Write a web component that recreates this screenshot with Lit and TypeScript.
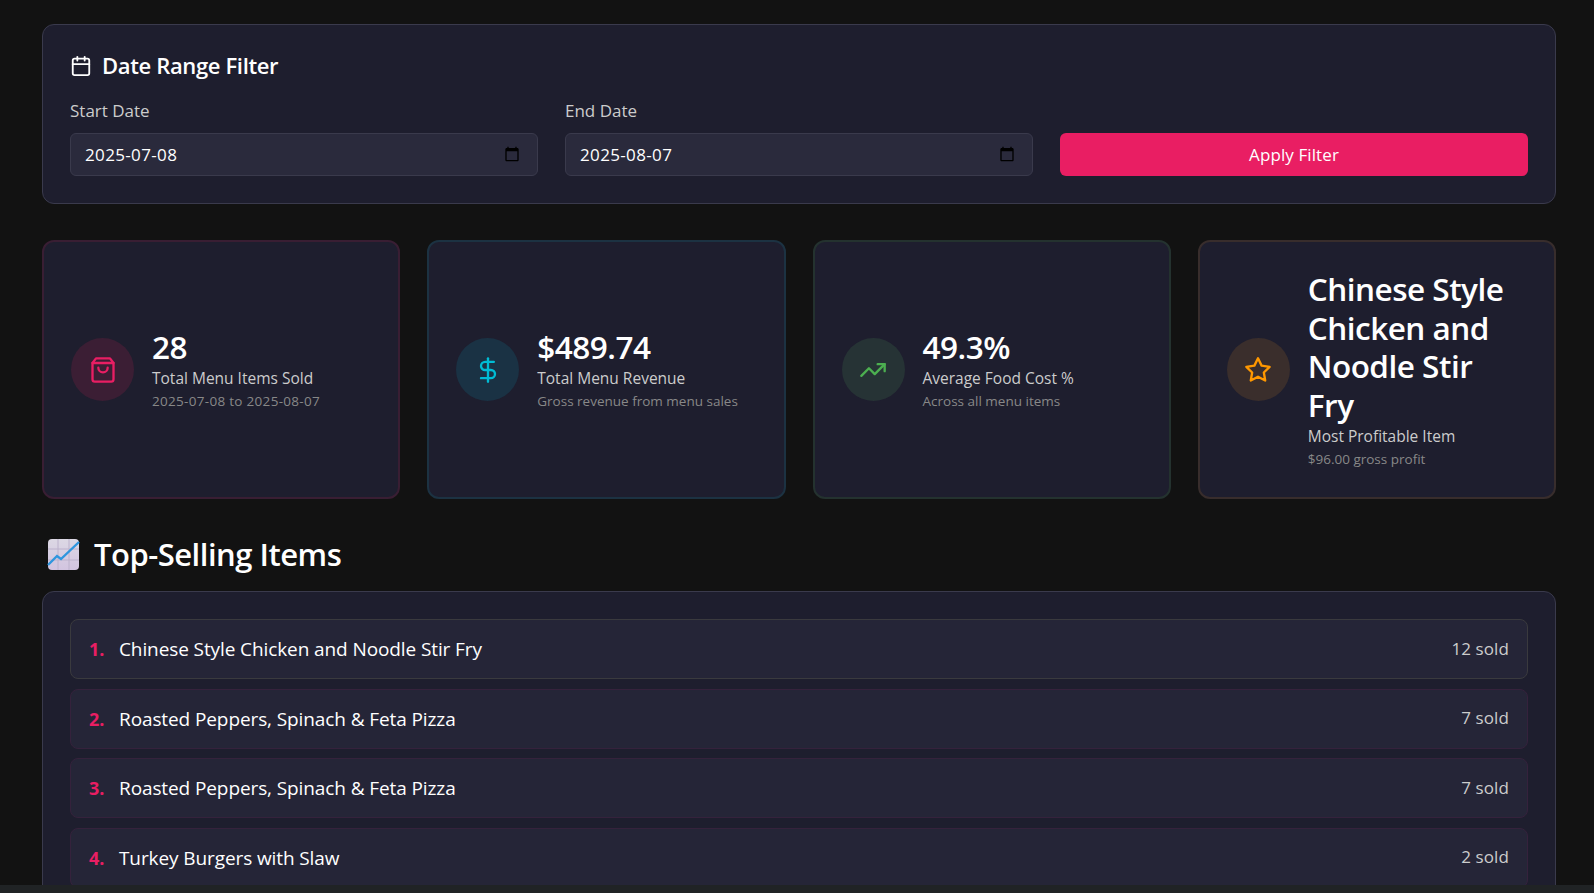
import { LitElement, html, css, svg } from "lit";
import { customElement } from "lit/decorators.js";

const calendar = svg`<rect x="3" y="4" width="18" height="18" rx="2"></rect><line x1="16" y1="2" x2="16" y2="6"></line><line x1="8" y1="2" x2="8" y2="6"></line><line x1="3" y1="10" x2="21" y2="10"></line>`;
const bag = svg`<path d="M6 2 3 6v14a2 2 0 0 0 2 2h14a2 2 0 0 0 2-2V6l-3-4Z"></path><line x1="3" y1="6" x2="21" y2="6"></line><path d="M16 10a4 4 0 0 1-8 0"></path>`;
const dollar = svg`<line x1="12" y1="2" x2="12" y2="22"></line><path d="M17 5H9.5a3.5 3.5 0 0 0 0 7h5a3.5 3.5 0 0 1 0 7H6"></path>`;
const trend = svg`<polyline points="22 7 13.5 15.5 8.5 10.5 2 17"></polyline><polyline points="16 7 22 7 22 13"></polyline>`;
const star = svg`<polygon points="12 2 15.09 8.26 22 9.27 17 14.14 18.18 21.02 12 17.77 5.82 21.02 7 14.14 2 9.27 8.91 8.26"></polygon>`;

const stats = [
  { tone: "pink", icon: bag, value: "28", label: "Total Menu Items Sold", sub: "2025-07-08 to 2025-08-07" },
  { tone: "cyan", icon: dollar, value: "$489.74", label: "Total Menu Revenue", sub: "Gross revenue from menu sales" },
  { tone: "green", icon: trend, value: "49.3%", label: "Average Food Cost %", sub: "Across all menu items" },
  { tone: "orange", icon: star, value: "Chinese Style Chicken and Noodle Stir Fry", label: "Most Profitable Item", sub: "$96.00 gross profit" },
];

const items = [
  { name: "Chinese Style Chicken and Noodle Stir Fry", sold: 12 },
  { name: "Roasted Peppers, Spinach & Feta Pizza", sold: 7 },
  { name: "Roasted Peppers, Spinach & Feta Pizza", sold: 7 },
  { name: "Turkey Burgers with Slaw", sold: 2 },
];

@customElement("app-root")
export class AppRoot extends LitElement {
  static styles = css`
    :host {
      display: flex;
      flex-direction: column;
      height: 100vh;
      overflow: hidden;
      background: #121212;
      color: #fff;
      font-family: "Open Sans", "Noto Sans", sans-serif;
    }
    .page {
      flex: 1;
      min-height: 0;
      overflow: hidden;
      padding: 24px 38px 0 42px;
    }
    .hscroll {
      flex: none;
      height: 8px;
      background: #202325;
    }
    .card {
      background: #1e1e2e;
      border: 1px solid #3a3a4c;
      border-radius: 12px;
      padding: 27px;
    }
    .filter-title {
      display: flex;
      align-items: center;
      gap: 9px;
      margin: -1px 0 18px;
      height: 30px;
      font-size: 22px;
      font-weight: 600;
      letter-spacing: -0.35px;
    }
    .filter-title span { margin: -2px 0 0 1px; }
    .icon {
      fill: none;
      stroke: currentColor;
      stroke-width: 2;
      stroke-linecap: round;
      stroke-linejoin: round;
      flex: none;
    }
    .filter-row {
      display: grid;
      grid-template-columns: repeat(3, 1fr);
      gap: 27px;
      align-items: end;
    }
    .field-label {
      display: block;
      font-size: 17px;
      line-height: 24px;
      margin-bottom: 10px;
      color: #ccc;
    }
    .date-input {
      display: flex;
      align-items: center;
      justify-content: space-between;
      height: 43px;
      box-sizing: border-box;
      padding: 0 14px;
      background: #2a2a3c;
      border: 1px solid #3a3a4c;
      border-radius: 6px;
      font-size: 17px;
      letter-spacing: 0.35px;
      color: #fff;
    }
    .picker {
      width: 16px;
      height: 16px;
      fill: #000;
      margin: -2px 3px 0 0;
    }
    .apply {
      height: 43px;
      border: none;
      border-radius: 6px;
      background: #e91e63;
      color: #fff;
      font: inherit;
      font-size: 17px;
      letter-spacing: 0.1px;
    }
    .stats {
      display: grid;
      grid-template-columns: repeat(4, 1fr);
      gap: 27px;
      margin-top: 36px;
    }
    .stat {
      display: flex;
      align-items: center;
      gap: 18px;
      background: #1e1e2e;
      border: 2px solid;
      border-radius: 12px;
      padding: 28px 35px 28px 27px;
    }
    .stat.pink { border-color: #391e33; }
    .stat.cyan { border-color: #1c3242; }
    .stat.green { border-color: #24322f; }
    .stat.orange { border-color: #382d2c; }
    .badge {
      flex: none;
      width: 63px;
      height: 63px;
      border-radius: 50%;
      display: flex;
      align-items: center;
      justify-content: center;
    }
    .pink .badge { background: #3b1e34; color: #e91e63; }
    .cyan .badge { background: #1a3244; color: #00bcd4; }
    .green .badge { background: #263335; color: #4caf50; }
    .orange .badge { background: #3a2e2c; color: #ff9800; }
    .value {
      font-size: 31.5px;
      line-height: 38.5px;
      font-weight: 600;
      letter-spacing: -0.5px;
    }
    .label {
      font-size: 15.5px;
      line-height: 21px;
      margin-top: 2px;
      color: #ccc;
      white-space: nowrap;
    }
    .sub {
      font-size: 13.5px;
      line-height: 19px;
      margin-top: 3px;
      color: #888;
      white-space: nowrap;
    }
    .pink .sub { letter-spacing: 0.3px; }
    .section-title {
      display: flex;
      align-items: center;
      gap: 14px;
      height: 42px;
      margin: 34px 0 16px 5px;
      font-size: 31px;
      font-weight: 600;
      letter-spacing: -0.5px;
    }
    .list {
      display: flex;
      flex-direction: column;
      gap: 9.6px;
    }
    .row {
      display: flex;
      align-items: center;
      justify-content: space-between;
      height: 60px;
      box-sizing: border-box;
      flex: none;
      padding: 0 18px;
      background: #252537;
      border: 1px solid #35223c;
      border-radius: 8px;
      font-size: 19px;
    }
    .row.first { border-color: #3a3a3e; }
    .row-name { display: flex; align-items: center; letter-spacing: -0.1px; }
    .rank {
      width: 30px;
      flex: none;
      color: #e91e63;
      font-weight: 700;
      font-size: 18px;
    }
    .sold { font-size: 17px; color: #ccc; letter-spacing: 0.1px; margin-top: -2px; }
  `;

  render() {
    return html`
      <div class="page">
        <section class="card">
          <h3 class="filter-title">
            <svg class="icon" width="22" height="22" viewBox="0 0 24 24">${calendar}</svg>
            <span>Date Range Filter</span>
          </h3>
          <div class="filter-row">
            ${this.renderDate("Start Date", "2025-07-08")}
            ${this.renderDate("End Date", "2025-08-07")}
            <button class="apply">Apply Filter</button>
          </div>
        </section>

        <div class="stats">
          ${stats.map(
            (s) => html`<div class="stat ${s.tone}">
              <div class="badge">
                <svg class="icon" width="28" height="28" viewBox="0 0 24 24">${s.icon}</svg>
              </div>
              <div>
                <div class="value">${s.value}</div>
                <div class="label">${s.label}</div>
                <div class="sub">${s.sub}</div>
              </div>
            </div>`
          )}
        </div>

        <h2 class="section-title">
          <svg width="33" height="32" viewBox="0 0 33 32">
            <defs>
              <linearGradient id="chart-bg" x1="0" y1="0" x2="0" y2="1">
                <stop offset="0" stop-color="#dcd8e4"></stop>
                <stop offset="1" stop-color="#d2c4e0"></stop>
              </linearGradient>
            </defs>
            <rect x="1" y="1" width="31" height="31" rx="4" fill="url(#chart-bg)"></rect>
            <path d="M11 1v31M22 1v31M1 11h31M1 22h31" stroke="#bcb2cc" stroke-width="1" fill="none"></path>
            <path d="M1 27 L10 18 L14 21 L32 4" stroke="#2f96de" stroke-width="2.4" fill="none"></path>
          </svg>
          Top-Selling Items
        </h2>

        <section class="card">
          <div class="list">
            ${items.map(
              (it, i) => html`<div class="row ${i === 0 ? "first" : ""}">
                <span class="row-name"><span class="rank">${i + 1}.</span>${it.name}</span>
                <span class="sold">${it.sold} sold</span>
              </div>`
            )}
          </div>
        </section>
      </div>
      <div class="hscroll"></div>
    `;
  }

  renderDate(label: string, value: string) {
    return html`<div>
      <span class="field-label">${label}</span>
      <div class="date-input">
        <span>${value}</span>
        <svg class="picker" viewBox="0 0 24 24">
          <path d="M20 3h-1V1h-2v2H7V1H5v2H4c-1.1 0-2 .9-2 2v16c0 1.1.9 2 2 2h16c1.1 0 2-.9 2-2V5c0-1.1-.9-2-2-2zm0 18H4V8h16v13z"></path>
        </svg>
      </div>
    </div>`;
  }
}
